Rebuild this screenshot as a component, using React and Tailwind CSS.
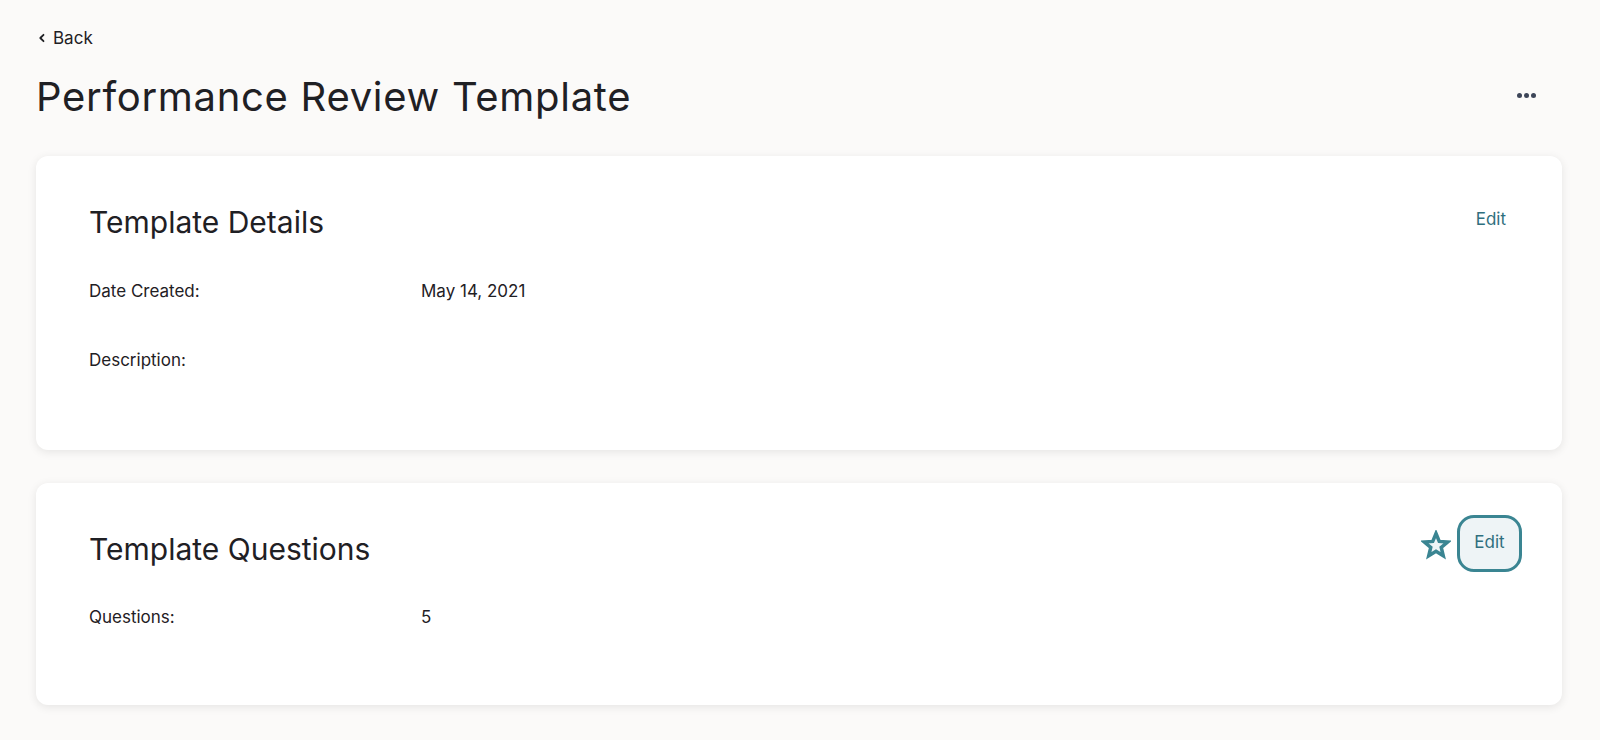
import React from "react";

function Star() {
  return (
    <svg width="30" height="30" viewBox="0 0 24 24" className="shrink-0">
      <path
        d="M12 2.8l2.6 6.3 6.8.5-5.2 4.4 1.6 6.6L12 17l-5.8 3.6 1.6-6.6-5.2-4.4 6.8-.5z"
        fill="#eef4f6"
        stroke="#3a8592"
        strokeWidth="2.8"
        strokeLinejoin="miter"
      />
    </svg>
  );
}

export default function App() {
  return (
    <div
      className="min-h-[740px] w-full bg-[#fbfaf9] pb-10 pl-[36px] pr-[38px] text-[#1f2024]"
      style={{ fontFamily: "Inter, 'Noto Sans', sans-serif" }}
    >
      <div className="flex h-[51px] items-end">
        <button className="flex h-[26px] items-center gap-[6px] pl-[1px] text-[17px] leading-[26px] text-[#1f2024]">
          <svg width="10" height="10" viewBox="0 0 10 10">
            <path d="M6.5 1.8L3.3 5l3.2 3.2" fill="none" stroke="#1f2024" strokeWidth="1.8" strokeLinecap="round" strokeLinejoin="round" />
          </svg>
          <span>Back</span>
        </button>
      </div>
      <div className="mt-[22px] flex h-[48px] items-center justify-between">
        <h1 className="text-[40px] font-normal leading-[48px] tracking-[0.7px]">Performance Review Template</h1>
        <button className="mr-[26px] flex -translate-y-[2px] items-center gap-[2px]">
          <span className="h-[5px] w-[5px] rounded-full bg-[#3d4558]" />
          <span className="h-[5px] w-[5px] rounded-full bg-[#3d4558]" />
          <span className="h-[5px] w-[5px] rounded-full bg-[#3d4558]" />
        </button>
      </div>

      <div className="mt-[35px] flex flex-col gap-[33px]">
        <section className="rounded-[12px] bg-white pb-[77px] pl-[53px] pr-[56px] pt-[48px] shadow-[0_2px_10px_rgba(0,0,0,0.09)]">
          <div className="flex h-9 items-center justify-between">
            <h2 className="text-[30px] font-normal leading-9">Template Details</h2>
            <button className="-translate-y-[2px] text-[17px] text-[#2f6f7e]">Edit</button>
          </div>
          <div className="mt-[38px] grid h-[26px] grid-cols-[332px_1fr] text-[17px] leading-[26px]">
            <span>Date Created:</span>
            <span>May 14, 2021</span>
          </div>
          <div className="mt-[43px] grid h-[26px] grid-cols-[332px_1fr] text-[17px] leading-[26px]">
            <span>Description:</span>
            <span></span>
          </div>
        </section>

        <section className="rounded-[12px] bg-white pb-[75px] pl-[53px] pr-[40px] pt-[48px] shadow-[0_2px_10px_rgba(0,0,0,0.09)]">
          <div className="flex h-9 items-center justify-between">
            <h2 className="text-[30px] font-normal leading-9">Template Questions</h2>
            <div className="flex -translate-y-[6px] items-center gap-[6px]">
              <div className="translate-y-[2px]">
                <Star />
              </div>
              <button className="flex h-[57px] w-[65px] items-center justify-center rounded-[17px] border-[3px] border-[#3a8592] bg-[#eef4f6] text-[17px] text-[#2f6f7e]">
                Edit
              </button>
            </div>
          </div>
          <div className="mt-[37px] grid h-[26px] grid-cols-[332px_1fr] text-[17px] leading-[26px]">
            <span>Questions:</span>
            <span>5</span>
          </div>
        </section>
      </div>
    </div>
  );
}
